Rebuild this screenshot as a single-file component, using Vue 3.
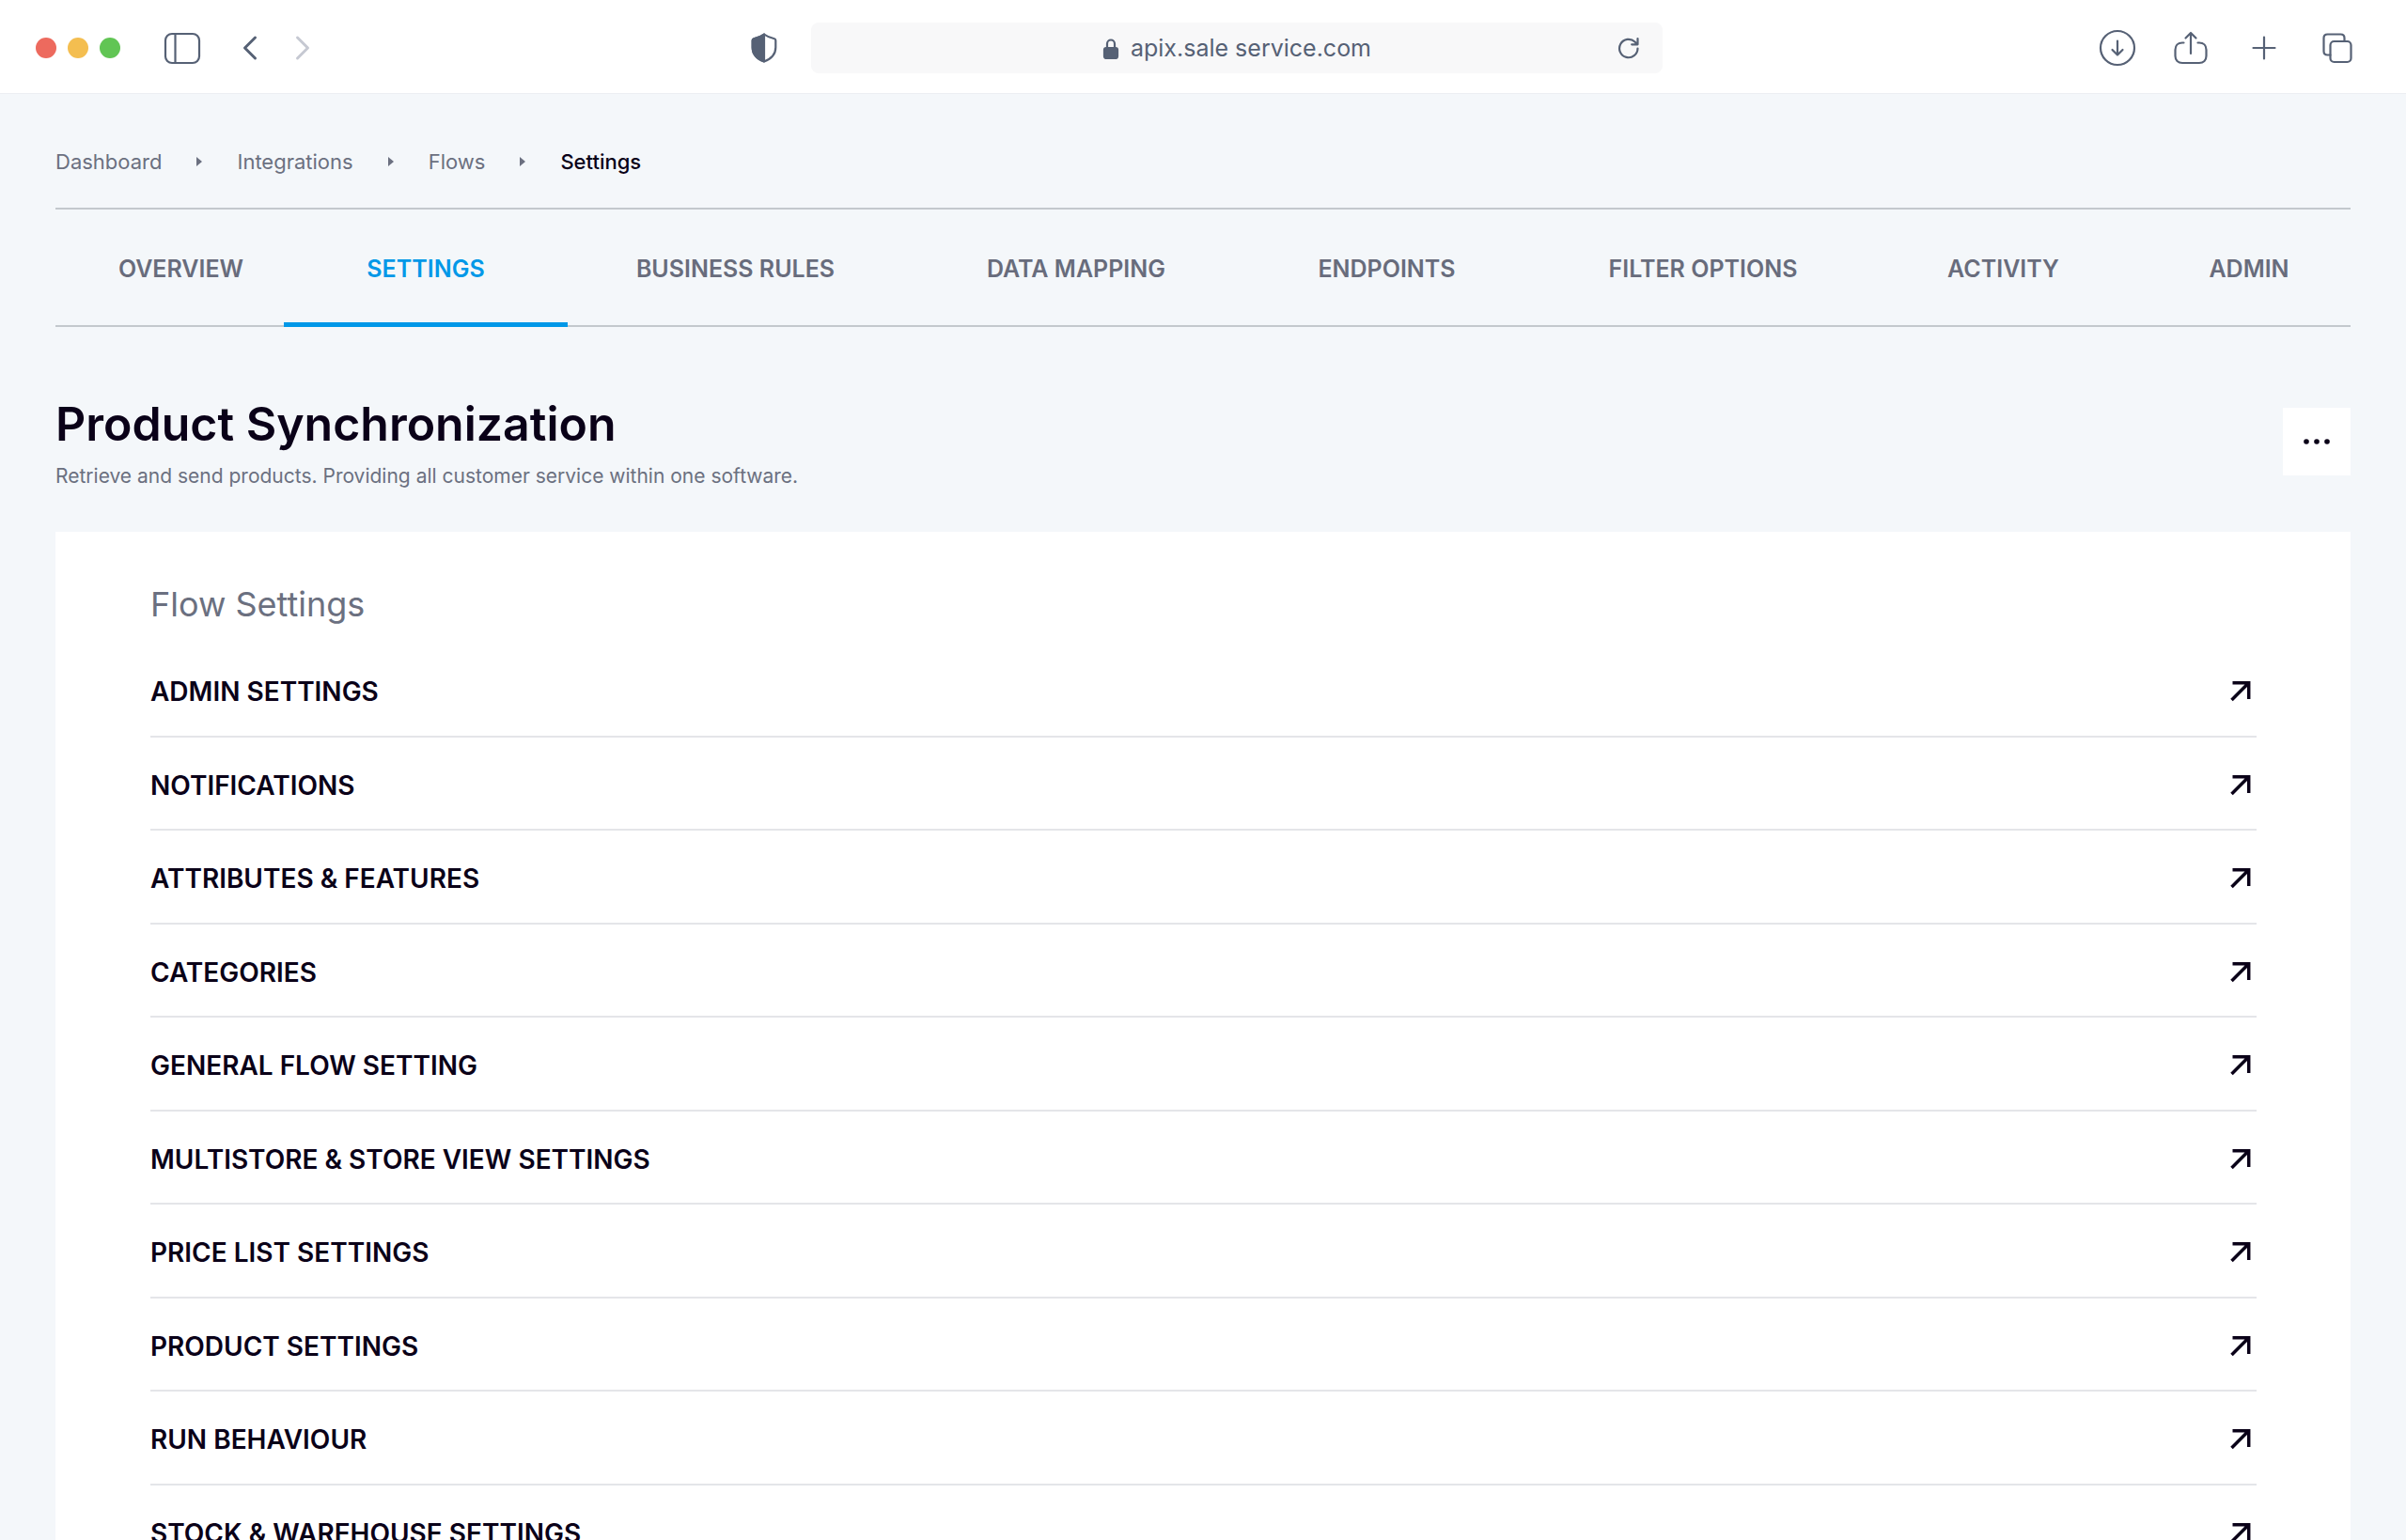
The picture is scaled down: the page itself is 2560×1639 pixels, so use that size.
<script setup>
const crumbs = ['Dashboard', 'Integrations', 'Flows', 'Settings']

const tabs = [
  'Overview',
  'Settings',
  'Business Rules',
  'Data Mapping',
  'Endpoints',
  'Filter Options',
  'Activity',
  'Admin',
]
const activeTab = 'Settings'

const settings = [
  'Admin Settings',
  'Notifications',
  'Attributes & Features',
  'Categories',
  'General Flow Setting',
  'Multistore & Store View Settings',
  'Price List Settings',
  'Product Settings',
  'Run Behaviour',
  'Stock & Warehouse Settings',
]
</script>

<template>
  <div class="window">
    <header class="toolbar">
      <div class="side">
        <div class="lights">
          <span class="light red"></span>
          <span class="light yellow"></span>
          <span class="light green"></span>
        </div>
        <button class="tool sidebar-toggle" type="button" aria-label="Toggle sidebar">
          <svg width="40" height="36" viewBox="0 0 40 36">
            <rect x="2" y="3" width="36" height="31" rx="7" />
            <path d="M12.500 3v31" />
          </svg>
        </button>
        <button class="tool back" type="button" aria-label="Back">
          <svg width="16" height="28" viewBox="0 0 16 28"><path d="M13.500 3 2.500 14l11 11" /></svg>
        </button>
        <button class="tool forward" type="button" aria-label="Forward">
          <svg width="16" height="28" viewBox="0 0 16 28"><path d="m2.500 3 11 11-11 11" /></svg>
        </button>
      </div>

      <div class="center">
        <button class="tool" type="button" aria-label="Privacy report">
          <svg width="28" height="32" viewBox="0 0 28 32">
            <path d="M14 1.500c3.500 2.700 7 3.800 11 4.700.9.200 1.300.8 1.300 1.700v7.600c0 7.500-5.300 12.300-12.300 15-7-2.700-12.300-7.500-12.300-15V7.900c0-.9.400-1.500 1.300-1.700 4-.9 7.500-2 11-4.700Z" />
            <path class="solid" d="M14 1.500v29c-7-2.700-12.300-7.500-12.300-15V7.900c0-.9.400-1.500 1.300-1.700 4-.9 7.500-2 11-4.700Z" />
          </svg>
        </button>
        <div class="address">
          <span class="site">
            <svg width="18" height="24" viewBox="0 0 18 24">
              <rect class="solid" x="2" y="12" width="14" height="11" rx="2" />
              <path d="M5 12V7.500a4 4 0 0 1 8 0V12" />
            </svg>
            <span>apix.sale service.com</span>
          </span>
          <button class="tool" type="button" aria-label="Reload">
            <svg width="24" height="24" viewBox="0 0 24 24">
              <path d="M21.500 12.500A9.700 9.700 0 1 1 18.500 5.500L21 8M21.500 2v6.300h-6.300" />
            </svg>
          </button>
        </div>
      </div>

      <div class="actions">
        <button class="tool" type="button" aria-label="Downloads">
          <svg width="40" height="40" viewBox="0 0 40 40">
            <circle cx="20" cy="20" r="18" />
            <path d="M20 12.500v15M14.500 22l5.500 5.500 5.500-5.500" />
          </svg>
        </button>
        <button class="tool" type="button" aria-label="Share">
          <svg width="40" height="40" viewBox="0 0 40 40">
            <path d="M12.500 14.500h-1.500c-4.500 0-7.500 3-7.500 7.500v6.500c0 4.500 3 7.500 7.500 7.500h18c4.500 0 7.500-3 7.500-7.500V22c0-4.500-3-7.500-7.500-7.500h-1.500M20 26V4M14.500 9.500 20 4l5.500 5.500" />
          </svg>
        </button>
        <button class="tool" type="button" aria-label="New tab">
          <svg width="40" height="40" viewBox="0 0 40 40"><path d="M20 8.500v23M8.500 20h23" /></svg>
        </button>
        <button class="tool" type="button" aria-label="Show all tabs">
          <svg width="40" height="40" viewBox="0 0 40 40">
            <rect x="12.500" y="13" width="22" height="22" rx="4" />
            <path d="M12.500 27.500H9.500c-2.500 0-4-1.500-4-4V9.500c0-2.500 1.500-4 4-4h14c2.500 0 4 1.500 4 4V13" />
          </svg>
        </button>
      </div>
    </header>

    <main class="page">
      <nav class="crumbs" aria-label="Breadcrumb">
        <template v-for="(crumb, i) in crumbs" :key="crumb">
          <svg v-if="i" class="caret" width="6" height="10" viewBox="0 0 6 10"><path d="M0 0 6 5 0 10Z" /></svg>
          <a href="#" :class="{ current: i === crumbs.length - 1 }">{{ crumb }}</a>
        </template>
      </nav>

      <nav class="tabs" aria-label="Flow sections">
        <a v-for="tab in tabs" :key="tab" href="#" class="tab" :class="{ active: tab === activeTab }">{{ tab }}</a>
      </nav>

      <div class="heading">
        <div>
          <h1>Product Synchronization</h1>
          <p>Retrieve and send products. Providing all customer service within one software.</p>
        </div>
        <button class="more" type="button" aria-label="More options">
          <svg width="28" height="6" viewBox="0 0 28 6">
            <circle cx="3" cy="3" r="2.800" />
            <circle cx="14" cy="3" r="2.800" />
            <circle cx="25" cy="3" r="2.800" />
          </svg>
        </button>
      </div>

      <section class="card">
        <h2>Flow Settings</h2>
        <ul class="rows">
          <li v-for="item in settings" :key="item">
            <a href="#">
              <span>{{ item }}</span>
              <svg width="24" height="24" viewBox="0 0 24 24"><path d="M3.500 2.700h17.200v17.200M20.700 2.700 2.500 20.900" /></svg>
            </a>
          </li>
        </ul>
      </section>
    </main>
  </div>
</template>

<style>
body {
  margin: 0;
}
</style>

<style scoped>
.window {
  height: 100vh;
  display: flex;
  flex-direction: column;
  overflow: hidden;
  background: #f4f7fa;
  color: #0a0118;
  font-family: Inter, "Liberation Sans", sans-serif;
  font-size: 22px;
}

a {
  color: inherit;
  text-decoration: none;
}

button {
  display: flex;
  align-items: center;
  justify-content: center;
  padding: 0;
  border: 0;
  background: none;
  color: inherit;
  font: inherit;
  cursor: pointer;
}

.toolbar {
  flex: none;
  display: grid;
  grid-template-columns: 1fr minmax(0, 970px) 1fr;
  align-items: center;
  box-sizing: border-box;
  height: 100px;
  padding: 3px 30px 0 38px;
  border-bottom: 1px solid #eceef2;
  background: #fff;
  color: #566175;
}

.toolbar svg {
  display: block;
  fill: none;
  stroke: currentColor;
  stroke-width: 2.200;
  stroke-linecap: round;
  stroke-linejoin: round;
}

.toolbar .solid {
  fill: currentColor;
}

.side,
.lights,
.center,
.site,
.actions {
  display: flex;
  align-items: center;
}

.lights {
  gap: 12px;
}

.light {
  width: 22px;
  height: 22px;
  border-radius: 50%;
}

.red {
  background: #ed6a5e;
}

.yellow {
  background: #f4be50;
}

.green {
  background: #61c554;
}

.sidebar-toggle {
  margin: 0 44px 0 46px;
}

.forward {
  margin-left: 40px;
  color: #c6c9d2;
}

.side .back svg,
.side .forward svg {
  stroke-width: 3;
}

.center {
  gap: 36px;
}

.address {
  flex: 1;
  display: grid;
  grid-template-columns: 1fr auto 1fr;
  align-items: center;
  height: 54px;
  padding: 0 24px;
  border-radius: 8px;
  background: #f8f8f9;
}

.site {
  grid-column: 2;
  gap: 12px;
  font-size: 25px;
}

.address .tool {
  justify-self: end;
}

.actions {
  justify-content: flex-end;
  gap: 38px;
  padding-right: 23px;
}

.page {
  flex: 1;
  min-height: 0;
  overflow-y: auto;
  scrollbar-width: none;
  padding: 0 59px;
}

.crumbs {
  display: flex;
  align-items: center;
  gap: 37px;
  padding: 56px 0 33px;
  line-height: 32px;
  color: #6b7080;
}

.crumbs .current {
  color: #0a0118;
  font-weight: 500;
}

.caret {
  fill: currentColor;
}

.tabs {
  display: grid;
  grid-template-columns: 243fr 302fr 357fr 368fr 293fr 380fr 259fr 240fr;
  border-top: 2px solid #c3c8cd;
  box-shadow: inset 0 -2px #c3c8cd;
  color: #686c7c;
  font-size: 25px;
  font-weight: 600;
  line-height: 32px;
  text-align: center;
  text-transform: uppercase;
}

.tab {
  padding: 47px 0 41px;
  border-bottom: 5px solid transparent;
  white-space: nowrap;
}

.tab:first-child,
.tab:last-child {
  padding-left: 24px;
}

.tab.active {
  border-color: #0098e8;
  color: #0098e8;
}

.heading {
  display: flex;
  align-items: center;
  justify-content: space-between;
  padding: 69px 0 43px;
}

h1 {
  margin: 0;
  font-size: 50px;
  font-weight: 600;
  line-height: 68px;
}

.heading p {
  margin: 6px 0 0;
  color: #6b7080;
  font-size: 21px;
  line-height: 32px;
}

.more {
  width: 72px;
  height: 72px;
  background: #fff;
}

.more svg {
  fill: #0a0118;
}

.card {
  padding: 53px 100px 56px 101px;
  background: #fff;
}

h2 {
  margin: 0;
  color: #6b7080;
  font-size: 36px;
  font-weight: 400;
  line-height: 48px;
}

.rows {
  display: flex;
  flex-direction: column;
  min-height: 995px;
  margin: 18px 0 0;
  padding: 0;
  list-style: none;
}

.rows li {
  flex: 1;
  display: flex;
  border-bottom: 2px solid #e4e5e9;
}

.rows a {
  flex: 1;
  display: flex;
  align-items: center;
  justify-content: space-between;
  padding: 5px 5px 0 0;
  font-size: 28px;
  font-weight: 600;
  line-height: 36px;
  text-transform: uppercase;
}

.rows svg {
  fill: none;
  stroke: currentColor;
  stroke-width: 3.500;
}
</style>
